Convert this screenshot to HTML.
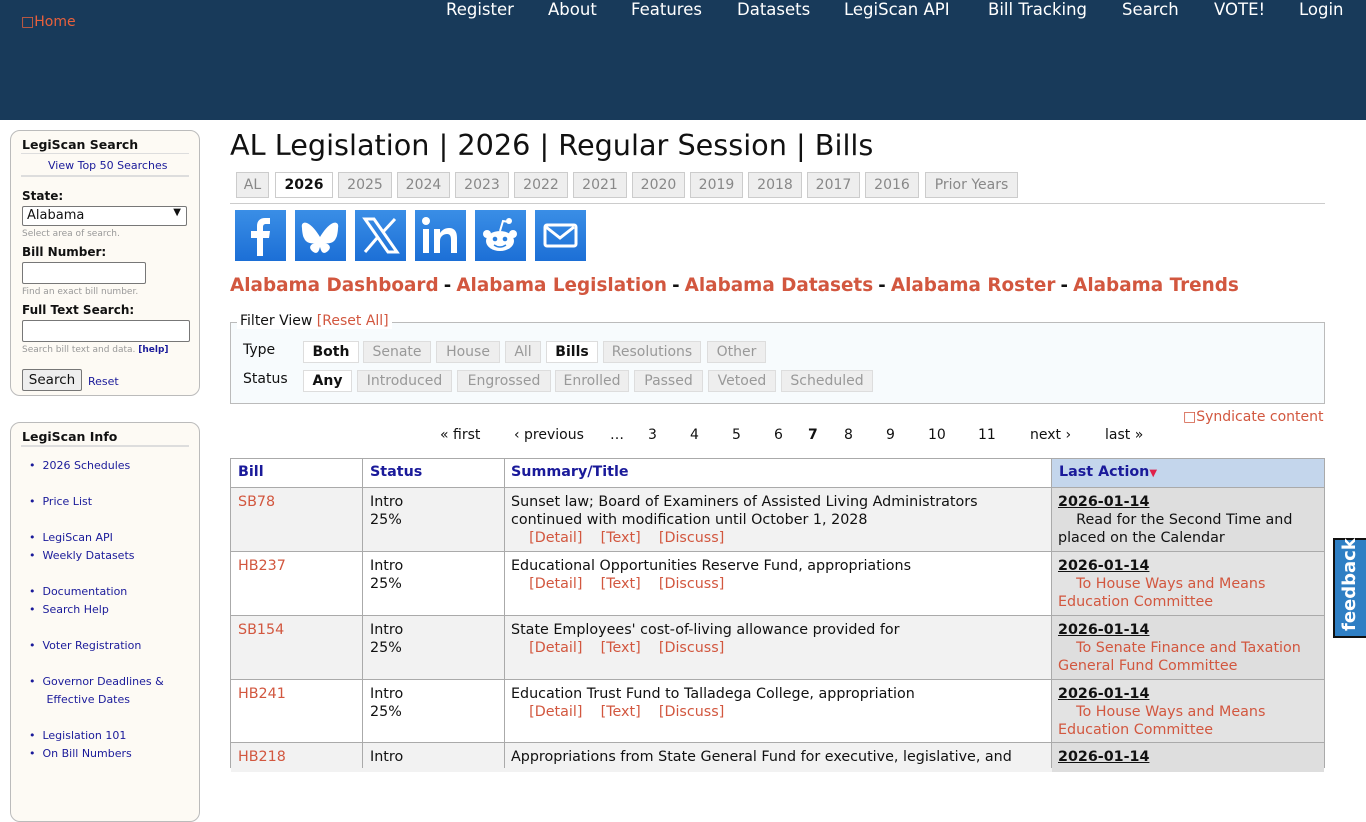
<!DOCTYPE html>
<html><head><meta charset="utf-8"><style>
*{box-sizing:border-box}
body{margin:0;width:1366px;height:768px;overflow:hidden;background:#fff;font-family:"DejaVu Sans","Liberation Sans",sans-serif;color:#111;position:relative}
.a{position:absolute;white-space:nowrap}
#hdr{position:absolute;left:0;top:0;width:1366px;height:120px;background:#183a5a}
#hdr .n{position:absolute;top:0px;color:#fff;font-size:16.5px}
.box{position:absolute;left:10px;width:190px;background:#fdfaf4;border:1px solid #bbb;border-radius:10px}
.box h4{margin:0;font-size:12.5px;font-weight:bold;position:absolute;left:11px}
.lnk{color:#1a1a9a}
.sm{font-size:9px;color:#999}
.lbl{font-size:12px;font-weight:bold}
.inp{position:absolute;background:#fff;border:1px solid #777;border-radius:2px}
.tab{position:absolute;top:172px;height:26px;border:1px solid #ccc;background:#eee;color:#888;font-size:14px;text-align:center;line-height:24px}
.tab.on{background:#fff;color:#111;font-weight:bold}
.ic{position:absolute;top:210px;width:51px;height:51px;background:linear-gradient(#3a8ee6,#1c6fd6)}
.st{font-size:18.4px;font-weight:bold;color:#d2573f}
.ft{position:absolute;height:22px;border:1px solid #ddd;background:#eee;color:#999;font-size:14px;text-align:center;line-height:20px}
.ft.on{background:#fff;color:#111;font-weight:bold}
.pg{position:absolute;top:427px;font-size:14px}
.row{position:absolute;left:231px;width:1093px;border-top:1px solid #aaa}
.c{position:absolute;font-size:14.3px;line-height:18px;top:5px}
.red{color:#d2573f}
.la{position:absolute;left:821px;top:0;bottom:0;width:272px;background:#e3e3e3}
.dt{font-weight:bold;text-decoration:underline}
</style></head><body>
<div id="hdr">
<span class="a" style="left:21px;top:14px;color:#e8603c;font-size:14px">&#9633;Home</span>
<span class="n" style="left:446px">Register</span>
<span class="n" style="left:548px">About</span>
<span class="n" style="left:631px">Features</span>
<span class="n" style="left:737px">Datasets</span>
<span class="n" style="left:844px">LegiScan API</span>
<span class="n" style="left:988px">Bill Tracking</span>
<span class="n" style="left:1122px">Search</span>
<span class="n" style="left:1214px">VOTE!</span>
<span class="n" style="left:1299px">Login</span>
</div>

<div class="box" style="top:130px;height:266px">
<h4 style="top:6px">LegiScan Search</h4>
<div class="a" style="left:10px;top:22px;width:168px;border-top:1px solid #ddd"></div>
<span class="a lnk" style="left:37px;top:28px;font-size:11px">View Top 50 Searches</span>
<div class="a" style="left:10px;top:44px;width:168px;border-top:2px solid #ddd"></div>
<span class="a lbl" style="left:11px;top:58px">State:</span>
<div class="inp" style="left:11px;top:75px;width:165px;height:20px;font-size:13px;padding:1px 4px">Alabama<span style="position:absolute;right:5px;top:0;font-size:10px">&#9660;</span></div>
<span class="a sm" style="left:11px;top:98px">Select area of search.</span>
<span class="a lbl" style="left:11px;top:114px">Bill Number:</span>
<div class="inp" style="left:11px;top:131px;width:124px;height:22px"></div>
<span class="a sm" style="left:11px;top:156px">Find an exact bill number.</span>
<span class="a lbl" style="left:11px;top:172px">Full Text Search:</span>
<div class="inp" style="left:11px;top:189px;width:168px;height:22px"></div>
<span class="a sm" style="left:11px;top:214px">Search bill text and data. <b style="color:#1a1a9a">[help]</b></span>
<div class="inp" style="left:11px;top:238px;width:60px;height:22px;background:#eee;font-size:13.5px;text-align:center;line-height:20px">Search</div>
<span class="a lnk" style="left:77px;top:244px;font-size:11px">Reset</span>
</div>

<div class="box" style="top:422px;height:400px">
<h4 style="top:6px">LegiScan Info</h4>
<div class="a" style="left:10px;top:22px;width:168px;border-top:2px solid #ddd"></div>
<div class="a lnk" style="left:18px;top:34px;font-size:11px;line-height:18px">
&bull;&nbsp; 2026 Schedules<br><br>&bull;&nbsp; Price List<br><br>&bull;&nbsp; LegiScan API<br>&bull;&nbsp; Weekly Datasets<br><br>&bull;&nbsp; Documentation<br>&bull;&nbsp; Search Help<br><br>&bull;&nbsp; Voter Registration<br><br>&bull;&nbsp; Governor Deadlines &amp;<br>&nbsp;&nbsp;&nbsp;&nbsp; Effective Dates<br><br>&bull;&nbsp; Legislation 101<br>&bull;&nbsp; On Bill Numbers</div>
</div>

<span class="a" style="left:230px;top:128px;font-size:28.7px">AL Legislation | 2026 | Regular Session | Bills</span>
<div class="tab" style="left:236px;width:33px">AL</div>
<div class="tab on" style="left:275px;width:58px">2026</div>
<div class="tab" style="left:338px;width:54px">2025</div>
<div class="tab" style="left:397px;width:53px">2024</div>
<div class="tab" style="left:455px;width:54px">2023</div>
<div class="tab" style="left:514px;width:54px">2022</div>
<div class="tab" style="left:573px;width:54px">2021</div>
<div class="tab" style="left:632px;width:53px">2020</div>
<div class="tab" style="left:690px;width:53px">2019</div>
<div class="tab" style="left:748px;width:54px">2018</div>
<div class="tab" style="left:807px;width:53px">2017</div>
<div class="tab" style="left:865px;width:54px">2016</div>
<div class="tab" style="left:925px;width:93px">Prior Years</div>
<div class="a" style="left:230px;top:203px;width:1095px;border-top:1px solid #ccc"></div>

<div class="ic" style="left:235px"><svg width="51" height="51"><path d="M28 46V28h6l1-7h-7v-4c0-2 1-3 3-3h4V8c-1 0-3-0-5-0-5 0-8 3-8 8v5h-6v7h6v18z" fill="#fff"/></svg></div>
<div class="ic" style="left:295px"><svg width="51" height="51"><path d="M12 13c5 2 10 9 13 14 3-5 8-12 13-14 3-1 6 0 5 5 0 3-1 9-2 10-2 5-7 6-11 5 4 1 7 4 3 8-6 5-7-1-8-4-1 3-2 9-8 4-4-4-1-7 3-8-4 1-9 0-11-5-1-1-2-7-2-10-1-5 2-6 5-5z" fill="#fff"/></svg></div>
<div class="ic" style="left:355px"><svg width="51" height="51"><path d="M10 9h9l23 33h-9z M10 42L22 28M28 22L40 9" stroke="#fff" stroke-width="3" fill="none"/></svg></div>
<div class="ic" style="left:415px"><svg width="51" height="51"><rect x="8" y="19" width="6" height="24" fill="#fff"/><circle cx="11" cy="11" r="4" fill="#fff"/><path d="M19 19h6v4c2-3 5-5 9-5 6 0 8 4 8 10v15h-6V30c0-4-1-6-4-6s-7 2-7 7v12h-6z" fill="#fff"/></svg></div>
<div class="ic" style="left:475px"><svg width="51" height="51"><ellipse cx="25" cy="31" rx="14" ry="10" fill="#fff"/><circle cx="12" cy="24" r="4" fill="#fff"/><circle cx="38" cy="24" r="4" fill="#fff"/><circle cx="34" cy="11" r="3" fill="#fff"/><path d="M25 21l3-10 6 1" stroke="#fff" stroke-width="2" fill="none"/><circle cx="20" cy="29" r="2.3" fill="#2a80e0"/><circle cx="30" cy="29" r="2.3" fill="#2a80e0"/><path d="M19 35q6 4 12 0" stroke="#2a80e0" stroke-width="1.5" fill="none"/></svg></div>
<div class="ic" style="left:535px"><svg width="51" height="51"><rect x="10" y="15" width="31" height="21" rx="2" stroke="#fff" stroke-width="3" fill="none"/><path d="M11 17l14 11 14-11" stroke="#fff" stroke-width="3" fill="none"/></svg></div>

<div class="a" style="left:230px;top:275px"><span class="st">Alabama Dashboard</span> <b style="font-size:18px">-</b> <span class="st">Alabama Legislation</span> <b style="font-size:18px">-</b> <span class="st">Alabama Datasets</span> <b style="font-size:18px">-</b> <span class="st">Alabama Roster</span> <b style="font-size:18px">-</b> <span class="st">Alabama Trends</span></div>

<div class="a" style="left:230px;top:322px;width:1095px;height:82px;border:1px solid #bbb;background:#f7fbfd"></div>
<span class="a" style="left:237px;top:313px;font-size:14px;background:#fff;padding:0 3px">Filter View <span class="red">[Reset All]</span></span>
<span class="a" style="left:243px;top:342px;font-size:14px">Type</span>
<span class="a" style="left:243px;top:371px;font-size:14px">Status</span>
<div class="ft on" style="left:303px;top:341px;width:56px">Both</div>
<div class="ft" style="left:363px;top:341px;width:68px">Senate</div>
<div class="ft" style="left:436px;top:341px;width:64px">House</div>
<div class="ft" style="left:505px;top:341px;width:36px">All</div>
<div class="ft on" style="left:546px;top:341px;width:52px">Bills</div>
<div class="ft" style="left:603px;top:341px;width:98px">Resolutions</div>
<div class="ft" style="left:707px;top:341px;width:59px">Other</div>
<div class="ft on" style="left:303px;top:370px;width:49px">Any</div>
<div class="ft" style="left:357px;top:370px;width:95px">Introduced</div>
<div class="ft" style="left:457px;top:370px;width:94px">Engrossed</div>
<div class="ft" style="left:555px;top:370px;width:74px">Enrolled</div>
<div class="ft" style="left:634px;top:370px;width:69px">Passed</div>
<div class="ft" style="left:708px;top:370px;width:68px">Vetoed</div>
<div class="ft" style="left:781px;top:370px;width:92px">Scheduled</div>

<span class="a red" style="left:1183px;top:409px;font-size:14px">&#9633;Syndicate content</span>
<span class="pg" style="left:440px">« first</span><span class="pg" style="left:514px">‹ previous</span><span class="pg" style="left:610px">…</span><span class="pg" style="left:648px">3</span><span class="pg" style="left:690px">4</span><span class="pg" style="left:732px">5</span><span class="pg" style="left:774px">6</span><span class="pg" style="left:808px;font-weight:bold">7</span><span class="pg" style="left:844px">8</span><span class="pg" style="left:886px">9</span><span class="pg" style="left:928px">10</span><span class="pg" style="left:978px">11</span><span class="pg" style="left:1030px">next ›</span><span class="pg" style="left:1105px">last »</span>

<div class="a" style="left:230px;top:458px;width:1095px;height:310px;border:1px solid #aaa;border-bottom:0"></div>
<div class="row" style="top:459px;height:28px;border-top:0;background:#fff">
<div class="a" style="left:821px;top:0;width:272px;height:28px;background:#c4d6ec"></div>
<b class="c" style="left:7px;top:4px;color:#1a1a9a">Bill</b><b class="c" style="left:139px;top:4px;color:#1a1a9a">Status</b><b class="c" style="left:280px;top:4px;color:#1a1a9a">Summary/Title</b><b class="c" style="left:828px;top:4px;color:#1a1a9a">Last Action<span style="color:#e0204a;font-size:10px">&#9660;</span></b>
</div>

<div class="row" style="top:487px;height:64px;background:#f2f2f2"><div class="la" style="background:#dedede"></div>
<div class="c red" style="left:7px">SB78</div><div class="c" style="left:139px">Intro<br>25%</div>
<div class="c" style="left:280px">Sunset law; Board of Examiners of Assisted Living Administrators<br>continued with modification until October 1, 2028<br><span class="red">&nbsp;&nbsp;&nbsp;&nbsp;[Detail]&nbsp;&nbsp;&nbsp;&nbsp;[Text]&nbsp;&nbsp;&nbsp;&nbsp;[Discuss]</span></div>
<div class="c" style="left:827px"><span class="dt">2026-01-14</span><br>&nbsp;&nbsp;&nbsp;&nbsp;Read for the Second Time and<br>placed on the Calendar</div></div>

<div class="row" style="top:551px;height:64px;background:#fff"><div class="la"></div>
<div class="c red" style="left:7px">HB237</div><div class="c" style="left:139px">Intro<br>25%</div>
<div class="c" style="left:280px">Educational Opportunities Reserve Fund, appropriations<br><span class="red">&nbsp;&nbsp;&nbsp;&nbsp;[Detail]&nbsp;&nbsp;&nbsp;&nbsp;[Text]&nbsp;&nbsp;&nbsp;&nbsp;[Discuss]</span></div>
<div class="c" style="left:827px"><span class="dt">2026-01-14</span><br><span class="red">&nbsp;&nbsp;&nbsp;&nbsp;To House Ways and Means<br>Education Committee</span></div></div>

<div class="row" style="top:615px;height:64px;background:#f2f2f2"><div class="la" style="background:#dedede"></div>
<div class="c red" style="left:7px">SB154</div><div class="c" style="left:139px">Intro<br>25%</div>
<div class="c" style="left:280px">State Employees' cost-of-living allowance provided for<br><span class="red">&nbsp;&nbsp;&nbsp;&nbsp;[Detail]&nbsp;&nbsp;&nbsp;&nbsp;[Text]&nbsp;&nbsp;&nbsp;&nbsp;[Discuss]</span></div>
<div class="c" style="left:827px"><span class="dt">2026-01-14</span><br><span class="red">&nbsp;&nbsp;&nbsp;&nbsp;To Senate Finance and Taxation<br>General Fund Committee</span></div></div>

<div class="row" style="top:679px;height:63px;background:#fff"><div class="la"></div>
<div class="c red" style="left:7px">HB241</div><div class="c" style="left:139px">Intro<br>25%</div>
<div class="c" style="left:280px">Education Trust Fund to Talladega College, appropriation<br><span class="red">&nbsp;&nbsp;&nbsp;&nbsp;[Detail]&nbsp;&nbsp;&nbsp;&nbsp;[Text]&nbsp;&nbsp;&nbsp;&nbsp;[Discuss]</span></div>
<div class="c" style="left:827px"><span class="dt">2026-01-14</span><br><span class="red">&nbsp;&nbsp;&nbsp;&nbsp;To House Ways and Means<br>Education Committee</span></div></div>

<div class="row" style="top:742px;height:30px;background:#f2f2f2"><div class="la" style="background:#dedede"></div>
<div class="c red" style="left:7px">HB218</div><div class="c" style="left:139px">Intro</div>
<div class="c" style="left:280px">Appropriations from State General Fund for executive, legislative, and</div>
<div class="c" style="left:827px"><span class="dt">2026-01-14</span></div></div>

<div class="a" style="left:362px;top:459px;height:309px;border-left:1px solid #aaa"></div>
<div class="a" style="left:504px;top:459px;height:309px;border-left:1px solid #aaa"></div>
<div class="a" style="left:1051px;top:459px;height:309px;border-left:1px solid #aaa"></div>

<div class="a" style="left:1333px;top:538px;width:33px;height:100px;background:#2f7fc4;border:2px solid #111;border-right:0"></div>
<span class="a" style="left:1339px;top:631px;color:#fff;font-weight:bold;font-size:18px;transform:rotate(-90deg);transform-origin:0 0">feedback</span>
</body></html>
